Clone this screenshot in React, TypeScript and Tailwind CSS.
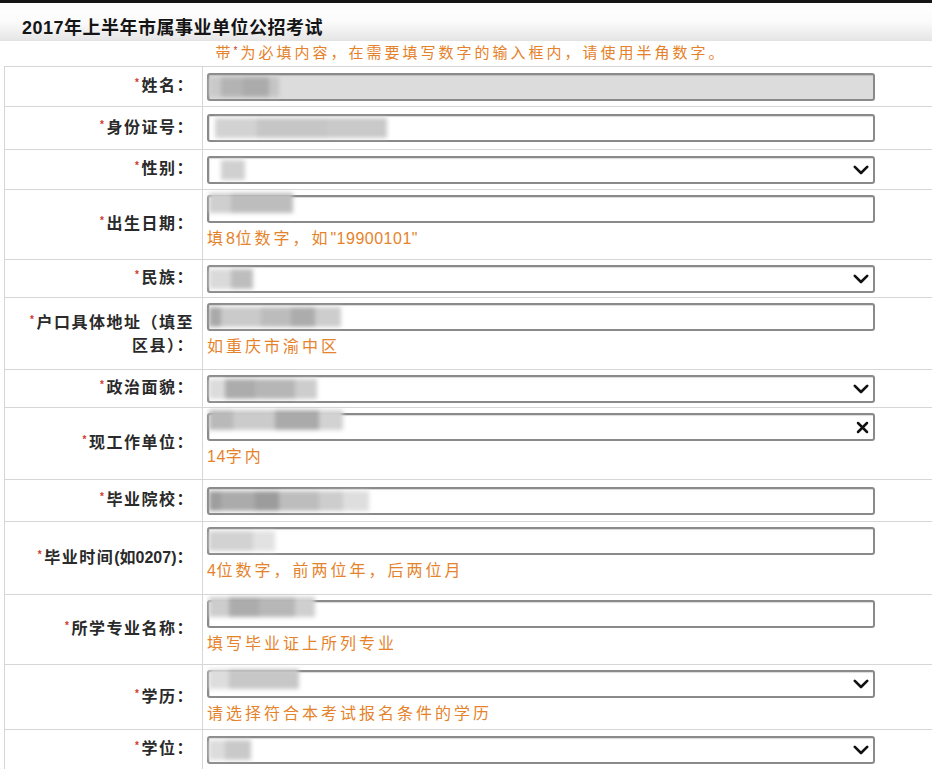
import React from "react";

type Seg = [number, string];

type Row = {
  label: React.ReactNode;
  h: number;
  kind: "input" | "select" | "clear";
  disabled?: boolean;
  hint?: React.ReactNode;
  blur: Seg[];
  blurOffset?: number;
  blurTop?: number;
};

const D = ({ children }: { children: React.ReactNode }) => (
  <span className="tracking-[0.5px]">{children}</span>
);

const rows: Row[] = [
  { label: "姓名：", h: 40, kind: "input", disabled: true, blur: [[12, "#c9c9c9"], [22, "#b3b3b3"], [26, "#ababab"], [10, "#c4c4c4"]] },
  { label: "身份证号：", h: 43, kind: "input", blur: [[42, "#d2d2d2"], [70, "#c6c6c6"], [60, "#c9c9c9"]], blurOffset: 6 },
  { label: "性别：", h: 40, kind: "select", blur: [[24, "#d0d0d0"]], blurOffset: 12 },
  {
    label: "出生日期：",
    h: 70,
    kind: "input",
    hint: (
      <>
        填<D>8</D>位数字，如<D>"19900101"</D>
      </>
    ),
    blur: [[22, "#cfcfcf"], [62, "#bdbdbd"]],
    blurTop: -4,
  },
  { label: "民族：", h: 38, kind: "select", blur: [[22, "#dadada"], [22, "#bdbdbd"]] },
  {
    label: (
      <>
        户口具体地址（填至
        <br />
        区县）：
      </>
    ),
    h: 72,
    kind: "input",
    hint: "如重庆市渝中区",
    blur: [[12, "#a9a9a9"], [40, "#cacaca"], [30, "#bcbcbc"], [24, "#acacac"], [26, "#cdcdcd"]],
  },
  { label: "政治面貌：", h: 38, kind: "select", blur: [[16, "#dcdcdc"], [30, "#acacac"], [40, "#b6b6b6"], [22, "#cdcdcd"]] },
  {
    label: "现工作单位：",
    h: 72,
    kind: "clear",
    hint: (
      <>
        <D>14</D>字内
      </>
    ),
    blur: [[24, "#b9b9b9"], [42, "#cbcbcb"], [44, "#aaaaaa"], [24, "#d2d2d2"]],
    blurTop: -5,
  },
  { label: "毕业院校：", h: 42, kind: "input", blur: [[12, "#9e9e9e"], [34, "#ababab"], [24, "#9c9c9c"], [40, "#bdbdbd"], [24, "#cdcdcd"], [26, "#dedede"]] },
  {
    label: (
      <>
        毕业时间<span className="tracking-[0px]">(如0207)</span>：
      </>
    ),
    h: 73,
    kind: "input",
    hint: (
      <>
        <D>4</D>位数字，前两位年，后两位月
      </>
    ),
    blur: [[44, "#d2d2d2"], [22, "#e2e2e2"]],
  },
  { label: "所学专业名称：", h: 70, kind: "input", hint: "填写毕业证上所列专业", blur: [[20, "#cdcdcd"], [30, "#acacac"], [36, "#b7b7b7"], [20, "#cfcfcf"]], blurTop: -5 },
  { label: "学历：", h: 65, kind: "select", hint: "请选择符合本考试报名条件的学历", blur: [[20, "#dddddd"], [70, "#c7c7c7"]], blurTop: -3 },
  { label: "学位：", h: 40, kind: "select", blur: [[16, "#dcdcdc"], [26, "#c9c9c9"]] },
];

function Chevron() {
  return (
    <svg width="16" height="10" viewBox="0 0 16 10" className="shrink-0">
      <path d="M1.8 1.8 L8 8 L14.2 1.8" fill="none" stroke="#111" strokeWidth="2.6" strokeLinecap="round" strokeLinejoin="round" />
    </svg>
  );
}

function Cross() {
  return (
    <svg width="13" height="13" viewBox="0 0 13 13" className="shrink-0">
      <path d="M2 2 L11 11 M11 2 L2 11" fill="none" stroke="#111" strokeWidth="2.5" strokeLinecap="round" />
    </svg>
  );
}

function Field({ row }: { row: Row }) {
  return (
    <div
      className={`relative h-[28px] w-[668px] rounded-[3px] border-2 border-[#8a8a8a] shadow-[inset_1px_1px_1px_rgba(0,0,0,0.15)] flex items-center justify-end pr-[4px] ${
        row.disabled ? "bg-[#dcdcdc]" : "bg-white"
      }`}
    >
      <div
        className="absolute left-0 flex h-[20px] blur-[2px]"
        style={{ marginLeft: row.blurOffset ?? 0, top: row.blurTop ?? 2 }}
      >
        {row.blur.map(([w, c], i) => (
          <div key={i} style={{ width: w, background: c }} className="h-full" />
        ))}
      </div>
      {row.kind === "select" && <Chevron />}
      {row.kind === "clear" && <Cross />}
    </div>
  );
}

export default function App() {
  return (
    <div
      className="relative h-[769px] w-[932px] overflow-hidden bg-white text-[#222]"
      style={{ fontFamily: '"Liberation Sans", "Noto Sans CJK SC", sans-serif' }}
    >
      <div className="h-[3px] bg-[#151515]" />
      <div className="flex h-[38px] items-center bg-gradient-to-b from-white via-[#fbfbfb] to-[#e6e6e6] pl-[22px] pt-[12px] border-b border-[#e3e3e3]">
        <span className="text-[18px] font-bold leading-[26px] tracking-[0.5px] text-[#151515]">2017年上半年市属事业单位公招考试</span>
      </div>
      <div className="flex h-[25px] items-center justify-center pl-[10px] text-[15px] tracking-[3px] text-[#e5812a]">
        <span>
          带<span className="relative -top-[4px] text-[10px] text-[#c0392b]">*</span>为必填内容，在需要填写数字的输入框内，请使用半角数字。
        </span>
      </div>
      <div className="ml-[4px] border-l border-t border-[#d6d6d6]">
        {rows.map((row, i) => (
          <div
            key={i}
            className="grid grid-cols-[198px_1fr] border-b border-[#d6d6d6]"
            style={{ height: row.h }}
          >
            <div className="flex items-center justify-end border-r border-[#d6d6d6] pr-[8px] text-right text-[16px] font-bold leading-[21px] tracking-[1.5px] text-[#2a2a2a]">
              <div>
                <span className="relative -top-[5px] mr-[1px] text-[10px] text-[#d0392b]">*</span>
                {row.label}
              </div>
            </div>
            <div className={`flex flex-col pl-[4px] ${row.hint ? "justify-start pt-[5px]" : "justify-center"}`}>
              <Field row={row} />
              {row.hint && (
                <div className="mt-[6px] text-[16px] leading-[20px] tracking-[3px] text-[#e5832c]">{row.hint}</div>
              )}
            </div>
          </div>
        ))}
      </div>
    </div>
  );
}
